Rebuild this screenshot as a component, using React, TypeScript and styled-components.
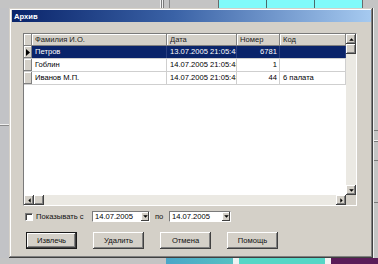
import React from 'react'
import styled, { createGlobalStyle } from 'styled-components'

const FACE = '#d4d0c8'

const GlobalStyle = createGlobalStyle`
    html, body {
        margin: 0;
        padding: 0;
    }
    body {
        font-family: "Liberation Sans", Arial, sans-serif;
        font-size: 7.6px;
        color: #000;
        overflow: hidden;
    }
`

const topCells = [
    { w: 160, bg: '#c4c4c4' },
    { w: 1, bg: '#f2f2f2' },
    { w: 1, bg: '#7a7a7a' },
    { w: 1, bg: '#f2f2f2' },
    { w: 1, bg: '#7a7a7a' },
    { w: 5, bg: '#c4c4c4' },
    { w: 1, bg: '#8a8a8a' },
    { w: 48, bg: '#c4c4c4' },
    { w: 1, bg: '#6a6a6a' },
    { w: 47, bg: '#80fafa' },
    { w: 1, bg: '#4a6a6a' },
    { w: 47, bg: '#80fafa' },
    { w: 1, bg: '#4a6a6a' },
    { w: 47, bg: '#80fafa' },
    { w: 1, bg: '#6a6a6a' },
    { w: 16, bg: '#c4c4c4' },
]

const bottomCells = [
    { w: 166, bg: '#c4c4c4' },
    { w: 67, bg: 'linear-gradient(to right, #4aa6c8, #56c0c2)' },
    { w: 6, bg: '#ecf2f2' },
    { w: 86, bg: '#56d6c6' },
    { w: 6, bg: '#f2f2f2' },
    { w: 47, bg: '#5a1c58' },
]

const columns = [
    { key: 'name', title: 'Фамилия И.О.', width: 135, right: false },
    { key: 'date', title: 'Дата', width: 70, right: false },
    { key: 'num', title: 'Номер', width: 43, right: true },
    { key: 'code', title: 'Код', width: 66, right: false },
] as const

type Row = { name: string; date: string; num: string; code: string }

const rows: Row[] = [
    { name: 'Петров', date: '13.07.2005 21:05:48', num: '6781', code: '' },
    { name: 'Гоблин', date: '14.07.2005 21:05:48', num: '1', code: '' },
    { name: 'Иванов М.П.', date: '14.07.2005 21:05:48', num: '44', code: '6 палата' },
]

const Desktop = styled.div`
    width: 378px;
    height: 264px;
    display: flex;
    flex-direction: column;
    background: #c4c4c4;
    overflow: hidden;
`

const Strip = styled.div<{ $h: number }>`
    height: ${(p) => p.$h}px;
    display: flex;
    flex-shrink: 0;
`

const StripCell = styled.div<{ $w: number; $bg: string }>`
    width: ${(p) => p.$w}px;
    flex-shrink: 0;
    background: ${(p) => p.$bg};
`

const Middle = styled.div`
    height: 250px;
    display: flex;
    flex-shrink: 0;
`

const LeftSide = styled.div`
    width: 9px;
    flex-shrink: 0;
    background: linear-gradient(
        to bottom,
        #c2c3c6 116px,
        #f0f0f0 116px,
        #f0f0f0 117px,
        #8a8a8a 117px,
        #8a8a8a 118px,
        #c2c3c6 118px
    );
`

const RightSide = styled.div`
    flex: 1;
    background: linear-gradient(
        to bottom,
        #c4c4c4 122px,
        #7a7a7a 122px,
        #7a7a7a 123px,
        #c4c4c4 123px,
        #c4c4c4 132px,
        #f4f4f4 132px,
        #f4f4f4 133px,
        #7a7a7a 133px,
        #7a7a7a 134px,
        #c4c4c4 134px,
        #c4c4c4 152px,
        #7a7a7a 152px,
        #7a7a7a 153px,
        #c4c4c4 153px,
        #c4c4c4 194px,
        #7a7a7a 194px,
        #7a7a7a 195px,
        #c4c4c4 195px
    );
    border-left: 1px solid #f0f0f0;
`

const Window = styled.div`
    width: 364px;
    height: 250px;
    box-sizing: border-box;
    flex-shrink: 0;
    padding: 2px 2px 2px 3px;
    display: flex;
    flex-direction: column;
    background: ${FACE};
    box-shadow: inset -1px -1px #404040, inset 1px 1px ${FACE}, inset -2px -2px #808080, inset 2px 2px #fff;
`

const TitleBar = styled.div`
    height: 12px;
    flex-shrink: 0;
    padding-left: 2px;
    display: flex;
    align-items: center;
    background: linear-gradient(to right, #0a246a, #3a62a6 45%, #a6caf0);
    color: #fff;
    font-weight: bold;
    font-size: 7.6px;
`

const Body = styled.div`
    flex: 1;
    display: flex;
    flex-direction: column;
    padding: 11px 0 0 11px;
`

const GridBox = styled.div`
    width: 334px;
    height: 173px;
    box-sizing: border-box;
    border: 1px solid;
    border-color: #7a7a7a #fff #fff #7a7a7a;
    display: grid;
    grid-template-columns: 1fr 10px;
    grid-template-rows: 1fr 10px;
    background: #fff;
`

const TableArea = styled.div`
    display: flex;
    flex-direction: column;
    overflow: hidden;
`

const TableRow = styled.div<{ $selected?: boolean }>`
    display: flex;
    flex-shrink: 0;
    height: ${(p) => (p.$selected === undefined ? 12 : 13)}px;
    box-sizing: border-box;
    background: ${(p) => (p.$selected ? '#0a246a' : '#fff')};
    color: ${(p) => (p.$selected ? '#fff' : '#000')};
    border-bottom: ${(p) => (p.$selected === undefined ? 'none' : '1px solid #cfcfcf')};
`

const Indicator = styled.div`
    width: 8px;
    flex-shrink: 0;
    box-sizing: border-box;
    background: ${FACE};
    box-shadow: inset -1px -1px #808080, inset 1px 1px #fff;
    display: flex;
    align-items: center;
    justify-content: center;
`

const HeadCell = styled.div<{ $w: number }>`
    width: ${(p) => p.$w}px;
    flex-shrink: 0;
    box-sizing: border-box;
    padding-left: 3px;
    line-height: 12px;
    background: ${FACE};
    box-shadow: inset -1px -1px #808080, inset 1px 1px #fff;
    color: #222;
    white-space: nowrap;
    overflow: hidden;
`

const Cell = styled.div<{ $w: number; $right?: boolean; $selected?: boolean }>`
    width: ${(p) => p.$w}px;
    flex-shrink: 0;
    box-sizing: border-box;
    padding: 0 2px 0 3px;
    line-height: 12px;
    text-align: ${(p) => (p.$right ? 'right' : 'left')};
    border-right: 1px solid ${(p) => (p.$selected ? '#2a3f80' : '#cfcfcf')};
    white-space: nowrap;
    overflow: hidden;
`

const VScroll = styled.div`
    display: flex;
    flex-direction: column;
    background: #ebe9e3;
`

const HScroll = styled.div`
    display: flex;
    background: #ebe9e3;
`

const ScrollButton = styled.div`
    width: 10px;
    height: 10px;
    flex-shrink: 0;
    box-sizing: border-box;
    background: ${FACE};
    box-shadow: inset -1px -1px #404040, inset 1px 1px #fff, inset -2px -2px #808080;
    display: flex;
    align-items: center;
    justify-content: center;
`

const Track = styled.div`
    flex: 1;
`

const Corner = styled.div`
    background: ${FACE};
`

const FilterRow = styled.div`
    display: flex;
    align-items: center;
    height: 11px;
    margin-top: 5px;
`

const Check = styled.div`
    width: 8px;
    height: 8px;
    margin-left: 2px;
    box-sizing: border-box;
    background: #fff;
    border: 1px solid;
    border-color: #7a7a7a #fff #fff #7a7a7a;
    box-shadow: inset 1px 1px #404040;
`

const Label = styled.span<{ $w: number; $pad?: number }>`
    width: ${(p) => p.$w}px;
    flex-shrink: 0;
    padding-left: ${(p) => p.$pad ?? 3}px;
    box-sizing: border-box;
    white-space: nowrap;
    color: #111;
`

const Combo = styled.div<{ $w: number }>`
    width: ${(p) => p.$w}px;
    height: 11px;
    box-sizing: border-box;
    display: flex;
    background: #fff;
    border: 1px solid;
    border-color: #7a7a7a #fff #fff #7a7a7a;
`

const ComboText = styled.span`
    flex: 1;
    padding-left: 2px;
    line-height: 9px;
    white-space: nowrap;
    overflow: hidden;
`

const ComboButton = styled.div`
    width: 8px;
    height: 9px;
    background: ${FACE};
    box-shadow: inset -1px -1px #404040, inset 1px 1px #fff;
    display: flex;
    align-items: center;
    justify-content: center;
`

const ButtonRow = styled.div`
    display: flex;
    gap: 16px;
    margin-top: 10px;
    padding-left: 3px;
`

const Button = styled.div<{ $default?: boolean }>`
    width: 51px;
    height: 17px;
    box-sizing: border-box;
    display: flex;
    align-items: center;
    justify-content: center;
    background: ${FACE};
    color: #111;
    border: ${(p) => (p.$default ? '1px solid #1a1a1a' : 'none')};
    box-shadow: inset -1px -1px #404040, inset 1px 1px #fff, inset -2px -2px #808080;
`

const Arrow = ({ dir }: { dir: 'up' | 'down' | 'left' | 'right' }) => {
    const pts = {
        up: '0,4 3.5,0.5 7,4',
        down: '0,0.5 3.5,4 7,0.5',
        left: '4,0 0.5,3.5 4,7',
        right: '0.5,0 4,3.5 0.5,7',
    }[dir]
    const vertical = dir === 'up' || dir === 'down'
    return (
        <svg width={vertical ? 5 : 3} height={vertical ? 3 : 5} viewBox={vertical ? '0 0 7 4.5' : '0 0 4.5 7'}>
            <polygon points={pts} fill="#000" />
        </svg>
    )
}

const App = () => {
    return (
        <>
            <GlobalStyle />
            <Desktop>
                <Strip $h={8}>
                    {topCells.map((c, i) => (
                        <StripCell key={i} $w={c.w} $bg={c.bg} />
                    ))}
                </Strip>
                <Middle>
                    <LeftSide />
                    <Window>
                        <TitleBar>Архив</TitleBar>
                        <Body>
                            <GridBox>
                                <TableArea>
                                    <TableRow>
                                        <Indicator />
                                        {columns.map((col) => (
                                            <HeadCell key={col.key} $w={col.width}>
                                                {col.title}
                                            </HeadCell>
                                        ))}
                                    </TableRow>
                                    {rows.map((row, index) => (
                                        <TableRow key={index} $selected={index === 0}>
                                            <Indicator>
                                                {index === 0 && (
                                                    <svg width="4" height="7" viewBox="0 0 4 7">
                                                        <polygon points="0,0 4,3.5 0,7" fill="#000" />
                                                    </svg>
                                                )}
                                            </Indicator>
                                            {columns.map((col) => (
                                                <Cell
                                                    key={col.key}
                                                    $w={col.width}
                                                    $right={col.right}
                                                    $selected={index === 0}
                                                >
                                                    {row[col.key]}
                                                </Cell>
                                            ))}
                                        </TableRow>
                                    ))}
                                </TableArea>
                                <VScroll>
                                    <ScrollButton>
                                        <Arrow dir="up" />
                                    </ScrollButton>
                                    <ScrollButton />
                                    <Track />
                                    <ScrollButton>
                                        <Arrow dir="down" />
                                    </ScrollButton>
                                </VScroll>
                                <HScroll>
                                    <ScrollButton>
                                        <Arrow dir="left" />
                                    </ScrollButton>
                                    <ScrollButton />
                                    <Track />
                                    <ScrollButton>
                                        <Arrow dir="right" />
                                    </ScrollButton>
                                </HScroll>
                                <Corner />
                            </GridBox>
                            <FilterRow>
                                <Check />
                                <Label $w={59}>Показывать с</Label>
                                <Combo $w={58}>
                                    <ComboText>14.07.2005</ComboText>
                                    <ComboButton>
                                        <Arrow dir="down" />
                                    </ComboButton>
                                </Combo>
                                <Label $w={19} $pad={5}>
                                    по
                                </Label>
                                <Combo $w={62}>
                                    <ComboText>14.07.2005</ComboText>
                                    <ComboButton>
                                        <Arrow dir="down" />
                                    </ComboButton>
                                </Combo>
                            </FilterRow>
                            <ButtonRow>
                                <Button $default>Извлечь</Button>
                                <Button>Удалить</Button>
                                <Button>Отмена</Button>
                                <Button>Помощь</Button>
                            </ButtonRow>
                        </Body>
                    </Window>
                    <RightSide />
                </Middle>
                <Strip $h={6}>
                    {bottomCells.map((c, i) => (
                        <StripCell key={i} $w={c.w} $bg={c.bg} />
                    ))}
                </Strip>
            </Desktop>
        </>
    )
}

export default App
